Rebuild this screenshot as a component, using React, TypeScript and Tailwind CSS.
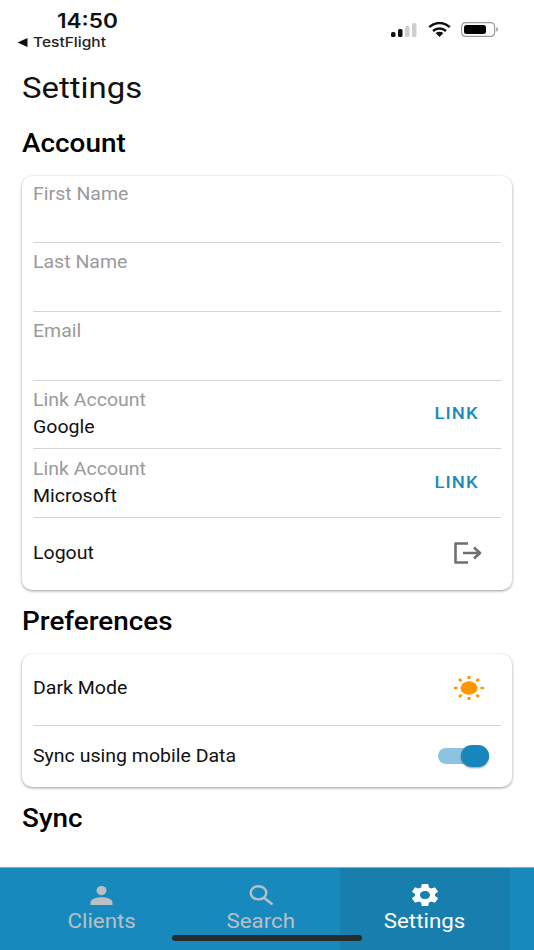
import React from "react";

function W({ children }: { children: React.ReactNode }) {
  return <span className="inline-block origin-left scale-x-[1.115]">{children}</span>;
}

function Field({ label, first }: { label: string; first?: boolean }) {
  return (
    <div className={"border-b border-[#d4d4d4] " + (first ? "h-[67px] pt-[6px]" : "h-[69px] pt-[7px]")}>
      <div className="text-[17.5px] leading-[24px] text-[#9a9a9a]"><W>{label}</W></div>
    </div>
  );
}

function LinkRow({ value, h }: { value: string; h: string }) {
  return (
    <div className={"flex items-center justify-between border-b border-[#d4d4d4] pr-[22px] " + h}>
      <div className="pb-[2px]">
        <div className="text-[17.5px] leading-[24px] text-[#9a9a9a]"><W>Link Account</W></div>
        <div className="mt-[3px] text-[17.5px] leading-[24px] text-[#111]"><W>{value}</W></div>
      </div>
      <div className="text-[16.5px] font-medium tracking-[1px] text-[#1a8abf]">
        <span className="inline-block origin-right scale-x-[1.115]">LINK</span>
      </div>
    </div>
  );
}

function SectionTitle({ children, className }: { children: React.ReactNode; className: string }) {
  return <div className={"px-[22px] text-[25px] leading-[30px] font-medium text-black " + className}><W>{children}</W></div>;
}

function Tab({ label, active, icon }: { label: string; active?: boolean; icon: React.ReactNode }) {
  return (
    <div className={"flex flex-col items-center pt-[16px] " + (active ? "w-[170px] bg-[#177eae] text-white" : "w-[159px] text-[#b9c0c3]")}>
      <div className="flex h-[22px] items-center">{icon}</div>
      <div className="mt-[3px] text-[20px] leading-[24px]">
        <span className="inline-block scale-x-[1.115]">{label}</span>
      </div>
    </div>
  );
}

export default function App() {
  return (
    <div className="relative flex h-[950px] w-[534px] flex-col overflow-hidden bg-white font-['Roboto',sans-serif]">
      <div className="flex h-[66px] shrink-0 justify-between">
        <div className="pl-[17px] pt-[9px]">
          <div className="pl-[40px] font-['Inter',sans-serif] text-[20px] leading-[24px] font-semibold text-[#111]">
            <span className="inline-block origin-left scale-x-[1.13]">14:50</span>
          </div>
          <div className="flex items-center gap-[5px] font-['Inter',sans-serif] text-[13.5px] leading-[18px] font-medium text-[#222]">
            <svg width="11" height="9" viewBox="0 0 11 9"><path d="M0.5 4.5 10.5 0V9Z" fill="#111" /></svg>
            <span className="inline-block origin-left scale-x-[1.15]">TestFlight</span>
          </div>
        </div>
        <div className="flex items-center gap-[10.5px] pb-[15px] pr-[36px] pt-[8px]">
          <svg width="26" height="14" viewBox="0 0 26 14">
            <rect x="0" y="9" width="4.5" height="5" rx="1.5" fill="#111" />
            <rect x="7" y="6" width="4.5" height="8" rx="1.5" fill="#111" />
            <rect x="14" y="3" width="4.5" height="11" rx="1.5" fill="#cfcfcf" />
            <rect x="21" y="0" width="4.5" height="14" rx="1.5" fill="#cfcfcf" />
          </svg>
          <svg width="23" height="15" viewBox="0 0 23 15">
            <path d="M1.2 5.2C7 -0.4 16 -0.4 21.8 5.2" fill="none" stroke="#111" strokeWidth="2.4" />
            <path d="M5 9C8.7 5.6 14.3 5.6 18 9" fill="none" stroke="#111" strokeWidth="2.4" />
            <path d="M7.6 11 11.5 15 15.4 11C13.2 9.3 9.8 9.3 7.6 11Z" fill="#111" />
          </svg>
          <svg width="37" height="15" viewBox="0 0 37 15">
            <rect x="0.6" y="0.6" width="33" height="13.8" rx="4" fill="none" stroke="#9a9a9a" strokeWidth="1.2" />
            <rect x="3" y="3" width="22" height="9" rx="2.5" fill="#000" />
            <rect x="35.2" y="5.5" width="1.5" height="4" rx="0.7" fill="#9a9a9a" />
          </svg>
        </div>
      </div>

      <div className="mt-[3px] px-[22px] text-[29.5px] leading-[38px] text-[#111]"><W>Settings</W></div>
      <SectionTitle className="mt-[22px]">Account</SectionTitle>

      <div className="mx-[22px] mt-[17px] h-[414px] shrink-0 rounded-[10px] bg-white px-[11px] shadow-[0_1px_3px_rgba(0,0,0,0.4)]">
        <Field first label="First Name" />
        <Field label="Last Name" />
        <Field label="Email" />
        <LinkRow value="Google" h="h-[68px]" />
        <LinkRow value="Microsoft" h="h-[69px]" />
        <div className="flex h-[72px] items-center justify-between pb-[2px] pr-[19px] text-[17.5px] text-[#111]">
          <W>Logout</W>
          <svg width="28" height="22" viewBox="0 0 28 22" fill="none" stroke="#6f6f6f" strokeWidth="2.6" strokeLinejoin="round">
            <path d="M14 1.5H1.5V20.5H14" />
            <path d="M9 11H26M20 5.5 26 11 20 16.5" />
          </svg>
        </div>
      </div>

      <SectionTitle className="mt-[17px]">Preferences</SectionTitle>

      <div className="mx-[22px] mt-[17px] h-[133px] shrink-0 rounded-[10px] bg-white px-[11px] shadow-[0_1px_3px_rgba(0,0,0,0.4)]">
        <div className="flex h-[72px] items-center justify-between border-b border-[#d4d4d4] pb-[3px] pr-[17px] text-[17.5px] text-[#111]">
          <W>Dark Mode</W>
          <svg width="30" height="24" viewBox="0 0 30 24" fill="#ff9800">
            <ellipse cx="15" cy="12" rx="8.5" ry="6.8" />
            <rect x="13.5" y="0" width="3" height="3" />
            <rect x="13.5" y="21" width="3" height="3" />
            <rect x="0" y="10.8" width="3.6" height="2.4" />
            <rect x="26.4" y="10.8" width="3.6" height="2.4" />
            <rect x="4.6" y="2.8" width="3.4" height="2.6" transform="rotate(35 6.3 4.1)" />
            <rect x="22" y="2.8" width="3.4" height="2.6" transform="rotate(-35 23.7 4.1)" />
            <rect x="4.6" y="18.6" width="3.4" height="2.6" transform="rotate(-35 6.3 19.9)" />
            <rect x="22" y="18.6" width="3.4" height="2.6" transform="rotate(35 23.7 19.9)" />
          </svg>
        </div>
        <div className="flex h-[60px] items-center justify-between pr-[12px] text-[17.5px] text-[#111]">
          <W>Sync using mobile Data</W>
          <div className="relative h-[16px] w-[51px] rounded-full bg-[#8cc4df]">
            <div className="absolute -top-[3px] right-0 h-[22px] w-[28px] rounded-full bg-[#1787bd] shadow-[0_1px_2px_rgba(0,0,0,0.4)]" />
          </div>
        </div>
      </div>

      <SectionTitle className="mt-[17px]">Sync</SectionTitle>

      <div className="absolute bottom-0 left-0 flex h-[83px] w-[534px] border-t border-[#8aa9b8] bg-[#1889bd] pl-[22px]">
        <Tab label="Clients" icon={
          <svg width="23" height="19" viewBox="0 0 23 19" fill="currentColor"><ellipse cx="11.5" cy="4.6" rx="5" ry="4.6" /><path d="M0.5 19V16.5C0.5 13 6.5 11.2 11.5 11.2S22.5 13 22.5 16.5V19Z" /></svg>
        } />
        <Tab label="Search" icon={
          <svg width="24" height="20" viewBox="0 0 24 20" fill="none" stroke="currentColor" strokeWidth="2.4"><ellipse cx="9.5" cy="7.8" rx="7.8" ry="6.6" /><path d="M15 12.8 23.5 19.5" /></svg>
        } />
        <Tab active label="Settings" icon={
          <svg width="28" height="24" viewBox="2 1.5 20 21" fill="currentColor" preserveAspectRatio="none"><path d="M19.14 12.94c.04-.3.06-.61.06-.94 0-.32-.02-.64-.07-.94l2.03-1.58a.49.49 0 0 0 .12-.61l-1.92-3.32a.488.488 0 0 0-.59-.22l-2.39.96c-.5-.38-1.03-.7-1.62-.94l-.36-2.54a.484.484 0 0 0-.48-.41h-3.84c-.24 0-.43.17-.47.41l-.36 2.54c-.59.24-1.13.57-1.62.94l-2.39-.96c-.22-.08-.47 0-.59.22L2.74 8.87c-.12.21-.08.47.12.61l2.03 1.58c-.05.3-.09.63-.09.94s.02.64.07.94l-2.03 1.58a.49.49 0 0 0-.12.61l1.92 3.32c.12.22.37.29.59.22l2.39-.96c.5.38 1.03.7 1.62.94l.36 2.54c.05.24.24.41.48.41h3.84c.24 0 .44-.17.47-.41l.36-2.54c.59-.24 1.13-.56 1.62-.94l2.39.96c.22.08.47 0 .59-.22l1.92-3.32c.12-.22.07-.47-.12-.61l-2.01-1.58zM12 15.6c-1.98 0-3.6-1.62-3.6-3.6s1.62-3.6 3.6-3.6 3.6 1.62 3.6 3.6-1.62 3.6-3.6 3.6z" /></svg>
        } />
      </div>
      <div className="absolute bottom-[9px] left-[172px] h-[6px] w-[190px] rounded-full bg-[#262b2e]" />
    </div>
  );
}
